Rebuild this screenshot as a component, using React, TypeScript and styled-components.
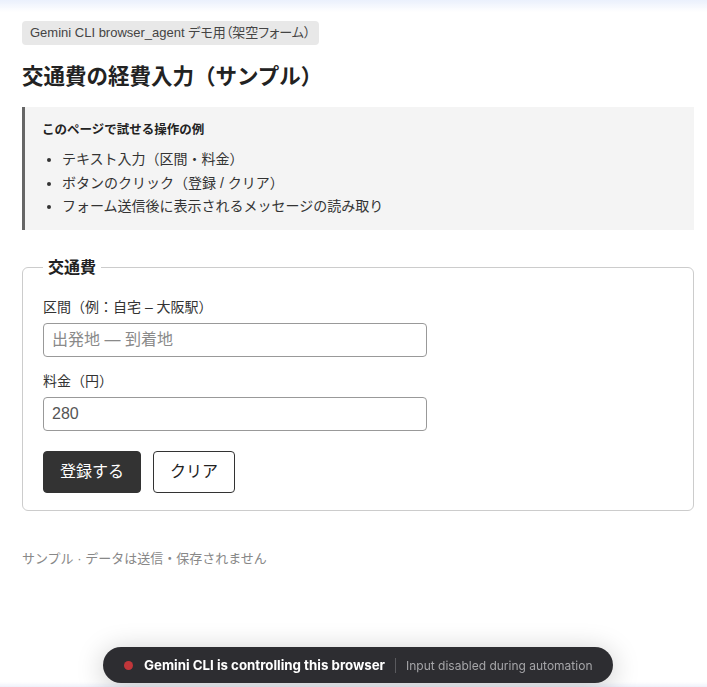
import React from "react";
import styled, { createGlobalStyle } from "styled-components";

const Global = createGlobalStyle`
  html, body { margin: 0; padding: 0; background: #fff; }
  body {
    font-family: "Liberation Sans", "Noto Sans CJK JP", sans-serif;
    color: #222;
  }
  * { box-sizing: border-box; }
`;

const Page = styled.main`
  padding: 21px 13px 60px 22px;
`;

const Badge = styled.span`
  display: inline-block;
  background: #e8e8e8;
  color: #444;
  font-size: 13px;
  line-height: 16px;
  padding: 4px 9px 4px 8px;
  border-radius: 4px;
  font-feature-settings: "palt";
`;

const Title = styled.h1`
  margin: 18px 0 0;
  font-size: 21.5px;
  line-height: 28px;
  font-weight: 700;
  color: #222;
`;

const InfoBox = styled.section`
  margin-top: 16px;
  background: #f4f4f4;
  border-left: 3px solid #666;
  padding: 13px 16px 11px 17px;
`;

const InfoTitle = styled.p`
  margin: 0 0 8px;
  font-size: 12.5px;
  line-height: 20px;
  font-weight: 700;
  color: #222;
`;

const InfoList = styled.ul`
  margin: 0;
  padding-left: 20px;
  font-size: 14px;
  line-height: 23.5px;
  color: #333;
`;

const Fieldset = styled.fieldset`
  margin: 27px 0 0;
  border: 1px solid #ccc;
  border-radius: 6px;
  padding: 18px 20px 17px;
`;

const Legend = styled.legend`
  padding: 0 5px;
  font-size: 16px;
  line-height: 22px;
  font-weight: 700;
  color: #222;
`;

const Field = styled.div`
  display: flex;
  flex-direction: column;
  gap: 6px;
  margin-bottom: 14px;
`;

const Label = styled.label`
  font-size: 14px;
  line-height: 20px;
  color: #333;
`;

const Input = styled.input`
  width: 384px;
  height: 34px;
  padding: 6px 8px;
  font: inherit;
  font-size: 16px;
  color: #555;
  border: 1px solid #999;
  border-radius: 4px;
  background: #fff;
  &::placeholder { color: #8a8a8a; }
`;

const Actions = styled.div`
  display: flex;
  gap: 12px;
  margin-top: 20px;
`;

const Button = styled.button<{ $primary?: boolean }>`
  font: inherit;
  font-size: 16px;
  line-height: 20px;
  padding: 10px 16px;
  border-radius: 4px;
  border: 1px solid #333;
  background: ${(p) => (p.$primary ? "#333" : "#fff")};
  color: ${(p) => (p.$primary ? "#fff" : "#222")};
  cursor: pointer;
`;

const Footer = styled.p`
  margin: 39px 0 0;
  font-size: 13px;
  line-height: 18px;
  color: #888;
`;

const TopGlow = styled.div`
  position: fixed;
  left: 0;
  right: 0;
  top: 0;
  height: 12px;
  background: linear-gradient(#eaf0fc, rgba(234, 240, 252, 0));
  pointer-events: none;
`;

const BottomGlow = styled.div`
  position: fixed;
  left: 0;
  right: 0;
  bottom: 0;
  height: 5px;
  background: linear-gradient(rgba(234, 240, 252, 0), #eef1fa);
  pointer-events: none;
`;

const Toast = styled.div`
  position: fixed;
  left: 103px;
  bottom: 4px;
  height: 36px;
  display: flex;
  align-items: center;
  padding: 0 21px 0 21px;
  background: #2d2d31;
  border-radius: 18px;
  box-shadow: 0 4px 28px rgba(0, 0, 0, 0.22);
  font-family: "Inter", "Liberation Sans", sans-serif;
  white-space: nowrap;
`;

const Dot = styled.span`
  width: 9px;
  height: 9px;
  border-radius: 50%;
  background: #c0363a;
  margin-right: 11px;
`;

const ToastMain = styled.span`
  color: #fff;
  font-size: 13.3px;
  font-weight: 700;
`;

const Sep = styled.span`
  width: 1px;
  height: 15px;
  background: #5a5a5e;
  margin: 0 10px;
`;

const ToastSub = styled.span`
  color: #a5a5a8;
  font-size: 12px;
`;

export default function App() {
  return (
    <>
      <Global />
      <TopGlow />
      <Page>
        <Badge>Gemini CLI browser_agent デモ用（架空フォーム）</Badge>
        <Title>交通費の経費入力（サンプル）</Title>
        <InfoBox>
          <InfoTitle>このページで試せる操作の例</InfoTitle>
          <InfoList>
            <li>テキスト入力（区間・料金）</li>
            <li>ボタンのクリック（登録 / クリア）</li>
            <li>フォーム送信後に表示されるメッセージの読み取り</li>
          </InfoList>
        </InfoBox>
        <Fieldset>
          <Legend>交通費</Legend>
          <Field>
            <Label htmlFor="route">区間（例：自宅 – 大阪駅）</Label>
            <Input id="route" placeholder="出発地 — 到着地" />
          </Field>
          <Field>
            <Label htmlFor="fare">料金（円）</Label>
            <Input id="fare" defaultValue="280" />
          </Field>
          <Actions>
            <Button $primary>登録する</Button>
            <Button>クリア</Button>
          </Actions>
        </Fieldset>
        <Footer>サンプル · データは送信・保存されません</Footer>
      </Page>
      <BottomGlow />
      <Toast>
        <Dot />
        <ToastMain>Gemini CLI is controlling this browser</ToastMain>
        <Sep />
        <ToastSub>Input disabled during automation</ToastSub>
      </Toast>
    </>
  );
}
